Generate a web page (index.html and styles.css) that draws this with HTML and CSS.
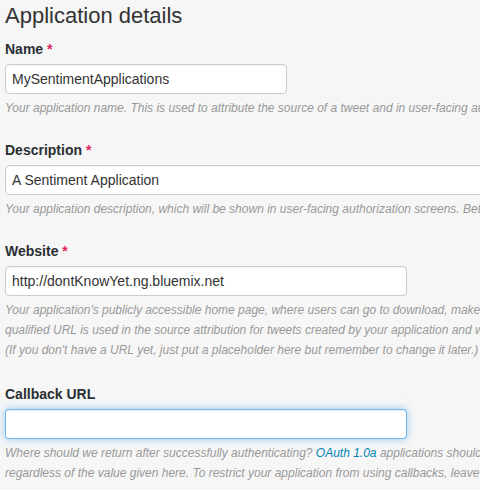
FILE: index.html
```html
<!DOCTYPE html>
<html>
<head>
<meta charset="utf-8">
<link rel="stylesheet" href="styles.css">
</head>
<body>
<div class="page">
  <h1 class="title">Application details</h1>
  <div class="group">
    <label class="label">Name <span class="req">*</span></label>
    <input class="field field-short" type="text" value="MySentimentApplications">
    <p class="help"><span class="line">Your application name. This is used to attribute the source of a tweet and in user-facing authorization screens. 32 characters max.</span></p>
  </div>
  <div class="group">
    <label class="label">Description <span class="req">*</span></label>
    <input class="field field-long" type="text" value="A Sentiment Application">
    <p class="help"><span class="line">Your application description, which will be shown in user-facing authorization screens. Between 10 and 200 characters max.</span></p>
  </div>
  <div class="group group-tall">
    <label class="label">Website <span class="req">*</span></label>
    <input class="field field-mid" type="text" value="http://dontKnowYet.ng.bluemix.net">
    <p class="help"><span class="line">Your application's publicly accessible home page, where users can go to download, make use of, or find out more information about your application. This fully-</span><span class="line">qualified URL is used in the source attribution for tweets created by your application and will be shown in user-facing authorization screens.</span><span class="line">(If you don't have a URL yet, just put a placeholder here but remember to change it later.)</span></p>
  </div>
  <div class="group">
    <label class="label">Callback URL</label>
    <input class="field field-mid focus" type="text" value="">
    <p class="help"><span class="line">Where should we return after successfully authenticating? <a class="link" href="#">OAuth 1.0a</a> applications should explicitly specify their oauth_callback URL on the request token step,</span><span class="line">regardless of the value given here. To restrict your application from using callbacks, leave this field blank.</span></p>
  </div>
</div>
</body>
</html>
```
FILE: styles.css
```css
html, body {
  margin: 0;
  padding: 0;
  overflow: hidden;
  background: #f6f6f6;
}
body {
  font-family: "Liberation Sans", Arial, Helvetica, sans-serif;
  font-size: 14px;
  line-height: 20px;
  color: #333;
}
.page {
  padding: 0 5px;
  width: 900px;
}
.title {
  margin: 0;
  font-size: 22px;
  line-height: 30px;
  font-weight: normal;
  color: #333;
  padding-top: 1px;
  margin-bottom: 8px;
}
.group {
  margin-bottom: 22px;
}
.group-tall {
  margin-bottom: 24px;
}
.label {
  display: block;
  font-weight: bold;
  margin-bottom: 5px;
  color: #292f33;
}
.req {
  color: #e0245e;
}
.field {
  display: block;
  box-sizing: border-box;
  height: 30px;
  padding: 4px 6px;
  margin: 0;
  font-family: "Liberation Sans", Arial, Helvetica, sans-serif;
  font-size: 14px;
  line-height: 20px;
  color: #333;
  background: #fff;
  border: 1px solid #ccc;
  border-radius: 4px;
  box-shadow: inset 0 1px 1px rgba(0,0,0,0.05);
  outline: none;
}
.field-short { width: 282px; }
.field-mid { width: 402px; }
.field-long { width: 620px; }
.focus {
  border-color: rgba(82,168,236,0.8);
  box-shadow: inset 0 1px 1px rgba(0,0,0,0.075), 0 0 8px rgba(82,168,236,0.6);
}
.help {
  margin: 4px 0 0;
  font-size: 12px;
  line-height: 20px;
  font-style: italic;
  color: #999;
}
.line {
  display: block;
  white-space: nowrap;
}
.link {
  color: #0084b4;
  text-decoration: none;
}
```
